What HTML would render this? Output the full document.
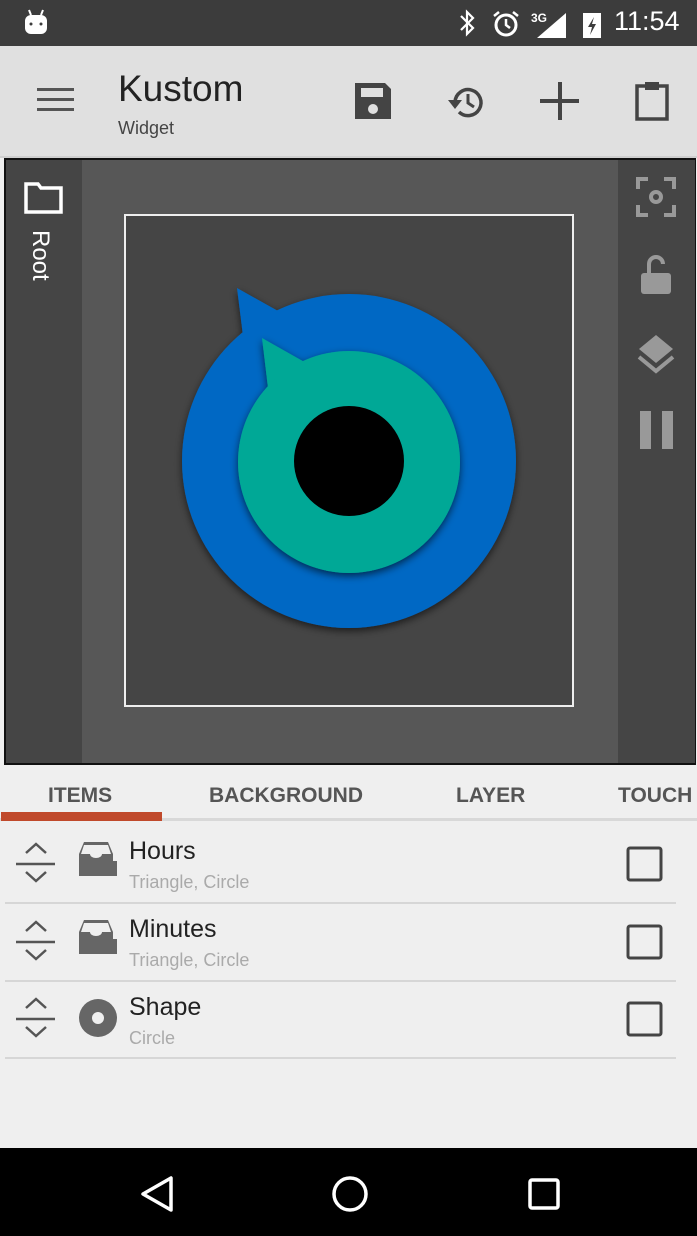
<!DOCTYPE html>
<html><head><style>
body{margin:0;width:697px;height:1236px;background:#efefef;font-family:"Liberation Sans",sans-serif;position:relative;overflow:hidden}
.a{position:absolute}
.row .t{position:absolute;left:129px;font-size:25px;color:#222}
.row .s{position:absolute;left:129px;font-size:18px;color:#aaa}
.tab{position:absolute;top:784px;font-size:21px;font-weight:bold;color:#555}
</style></head><body>
<div class="a" style="left:0;top:0;width:697px;height:46px;background:#3c3c3c"></div>
<svg class="a" style="left:24px;top:8px" width="24" height="28" viewBox="0 0 24 28"><path d="M5 2l2 5M19 2l-2 5" stroke="#fff" stroke-width="2"/><rect x="1" y="7" width="22" height="19" rx="6" fill="#fff"/><circle cx="7" cy="16" r="1.5" fill="#3c3c3c"/><circle cx="17" cy="16" r="1.5" fill="#3c3c3c"/></svg>
<svg class="a" style="left:455px;top:8px" width="160" height="32" viewBox="0 0 160 32"><path d="M6 8l12 12-6 6V4l6 6L6 22" stroke="#fff" stroke-width="2.2" fill="none"/><circle cx="51" cy="17" r="10" stroke="#fff" stroke-width="3" fill="none"/><path d="M51 11v6l4 3M39 8l5-4M63 8l-5-4" stroke="#fff" stroke-width="2.5" fill="none"/><text x="76" y="14" font-size="12" font-weight="bold" fill="#fff" font-family="Liberation Sans">3G</text><path d="M82 30L111 5v25z" fill="#fff"/><rect x="128" y="5" width="18" height="25" fill="#fff"/><path d="M139 9l-6 10h4l-2 8 6-11h-4z" fill="#3c3c3c"/></svg>
<div class="a" style="left:614px;top:6px;color:#fff;font-size:27px">11:54</div>
<div class="a" style="left:0;top:46px;width:697px;height:110px;background:#e0e0e0;border-bottom:2px solid #cfcfcf"></div>
<div class="a" style="left:37px;top:88px;width:37px;height:3px;background:#555;box-shadow:0 10px 0 #555,0 20px 0 #555"></div>
<div class="a" style="left:118px;top:68px;font-size:37px;color:#222">Kustom</div>
<div class="a" style="left:118px;top:118px;font-size:18px;color:#444">Widget</div>
<svg class="a" style="left:352px;top:80px" width="42" height="42" viewBox="0 0 42 42"><path d="M3 3h30l6 6v30H3z" fill="#444"/><rect x="9" y="8" width="22" height="9" fill="#e0e0e0"/><circle cx="21" cy="29" r="5" fill="#e0e0e0"/></svg>
<svg class="a" style="left:446px;top:82px" width="42" height="40" viewBox="0 0 42 40"><path d="M9 20a13 13 0 1 1 4 10" stroke="#444" stroke-width="3.5" fill="none"/><path d="M2 18h14l-7 9z" fill="#444"/><path d="M22 12v9l6 4" stroke="#444" stroke-width="3" fill="none"/></svg>
<div class="a" style="left:540px;top:99px;width:39px;height:4px;background:#444"></div>
<div class="a" style="left:558px;top:82px;width:4px;height:38px;background:#444"></div>
<svg class="a" style="left:634px;top:80px" width="36" height="42" viewBox="0 0 36 42"><rect x="3" y="6" width="30" height="33" fill="none" stroke="#444" stroke-width="3.5"/><rect x="11" y="2" width="14" height="8" fill="#444"/></svg>
<div class="a" style="left:4px;top:158px;width:692px;height:607px;background:#111"></div>
<div class="a" style="left:6px;top:160px;width:76px;height:603px;background:#454545"></div>
<div class="a" style="left:82px;top:160px;width:536px;height:603px;background:#575757"></div>
<div class="a" style="left:618px;top:160px;width:77px;height:603px;background:#454545"></div>
<svg class="a" style="left:24px;top:180px" width="40" height="36" viewBox="0 0 40 36"><path d="M2 4h12l3 4h20v24H2z" fill="none" stroke="#fff" stroke-width="3.5"/></svg>
<div class="a" style="left:26px;top:230px;color:#fff;font-size:24px;transform:rotate(90deg);transform-origin:0 0;left:54px">Root</div>
<svg class="a" style="left:634px;top:175px" width="44" height="290" viewBox="0 0 44 290"><g stroke="#999" stroke-width="4" fill="none"><path d="M4 14V4h10M30 4h10v10M40 30v10H30M14 40H4V30"/><circle cx="22" cy="22" r="5"/><path d="M15 98v-9a7 7 0 0 1 14 0"/></g><rect x="7" y="98" width="30" height="21" rx="3" fill="#999"/><path d="M22 160l17 14-17 14-17-14z" fill="#999"/><path d="M5 182l17 14 17-14" stroke="#999" stroke-width="4" fill="none"/><rect x="6" y="236" width="11" height="38" fill="#999"/><rect x="28" y="236" width="11" height="38" fill="#999"/></svg>
<div class="a" style="left:124px;top:214px;width:446px;height:489px;border:2px solid #eee;background:#454545"></div>
<svg class="a" style="left:150px;top:270px" width="400" height="380" viewBox="150 270 400 380"><defs><filter id="sh"><feDropShadow dx="0" dy="3" stdDeviation="4" flood-opacity="0.6"/></filter></defs><g filter="url(#sh)"><path d="M237 288l50 28-44 20z" fill="#0068c4"/><circle cx="349" cy="461" r="167" fill="#0068c4"/></g><g filter="url(#sh)"><path d="M262 338l46 26-40 24z" fill="#00a896"/><circle cx="349" cy="462" r="111" fill="#00a896"/></g><circle cx="349" cy="461" r="55" fill="#000"/></svg>
<div class="tab" style="left:48px">ITEMS</div>
<div class="tab" style="left:209px">BACKGROUND</div>
<div class="tab" style="left:456px">LAYER</div>
<div class="tab" style="left:618px">TOUCH</div>
<div class="a" style="left:0;top:818px;width:697px;height:3px;background:#d8d8d8"></div>
<div class="a" style="left:1px;top:812px;width:161px;height:9px;background:#c0492b"></div>
<div class="row a" style="left:0;top:825px;width:697px;height:78px"><span class="t" style="top:12px">Hours</span><span class="s" style="top:47px">Triangle, Circle</span></div>
<div class="row a" style="left:0;top:903px;width:697px;height:78px"><span class="t" style="top:12px">Minutes</span><span class="s" style="top:47px">Triangle, Circle</span></div>
<div class="row a" style="left:0;top:981px;width:697px;height:78px"><span class="t" style="top:12px">Shape</span><span class="s" style="top:47px">Circle</span></div>
<div class="a" style="left:5px;top:902px;width:671px;height:2px;background:#d6d6d6;box-shadow:0 78px 0 #d6d6d6,0 155px 0 #d6d6d6"></div>
<svg class="a" style="left:0;top:825px" width="697" height="235" viewBox="0 0 697 235">
<g id="r1"><path d="M26 28l10-9 10 9M16 39h39M26 47l10 9 10-9" stroke="#555" stroke-width="2.5" fill="none"/><rect x="628" y="23" width="33" height="32" rx="2" stroke="#444" stroke-width="3" fill="none"/></g>
<use href="#r1" y="78"/><use href="#r1" y="155"/>
<g fill="#666"><path d="M84 17h24l5 12v7H79v-7zM84 20l-3 9h9a6 4 0 0 0 12 0h9l-3-9z" fill-rule="evenodd"/><rect x="79" y="36" width="38" height="15"/></g>
<g fill="#666" transform="translate(0 78)"><path d="M84 17h24l5 12v7H79v-7zM84 20l-3 9h9a6 4 0 0 0 12 0h9l-3-9z" fill-rule="evenodd"/><rect x="79" y="36" width="38" height="15"/></g>
<circle cx="98" cy="193" r="19" fill="#666"/><circle cx="98" cy="193" r="6" fill="#efefef"/>
</svg>
<div class="a" style="left:0;top:1148px;width:697px;height:88px;background:#000"></div>
<svg class="a" style="left:0;top:1148px" width="697" height="88" viewBox="0 0 697 88"><path d="M171 30v32L143 46z" stroke="#fff" stroke-width="3.5" fill="none" stroke-linejoin="round"/><circle cx="350" cy="46" r="16" stroke="#fff" stroke-width="3.5" fill="none"/><rect x="530" y="32" width="28" height="28" rx="2" stroke="#fff" stroke-width="3.5" fill="none"/></svg>
</body></html>
